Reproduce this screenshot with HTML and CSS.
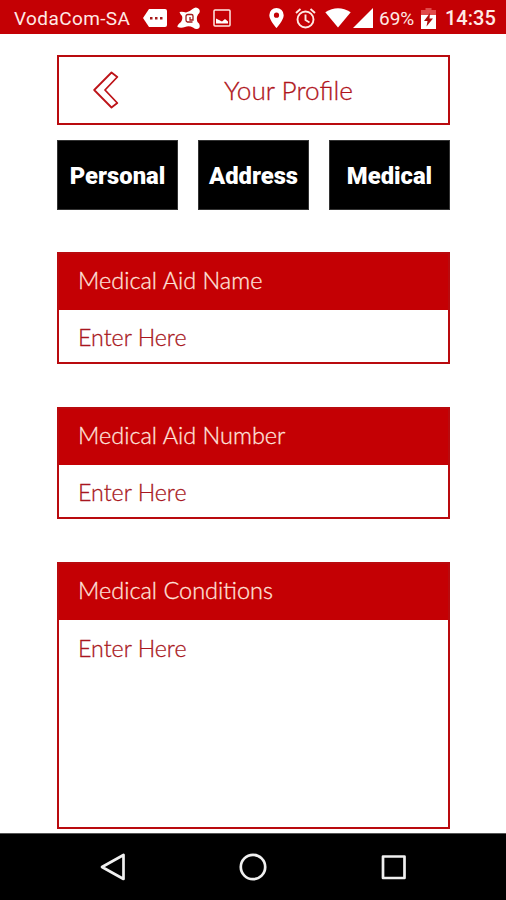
FILE: index.html
```html
<!DOCTYPE html>
<html lang="en">
  <head>
    <meta charset="UTF-8" />
    <meta name="viewport" content="width=device-width, initial-scale=1.0" />
    <title>Your Profile</title>
    <link rel="stylesheet" href="styles.css">
  </head>
  <body>
    <div class="status-bar">
      <div class="status-left">
        <span class="carrier">VodaCom-SA</span>
        <svg class="icon-message" width="24" height="18" viewBox="0 0 24 18">
          <path d="M6 0h16a2 2 0 0 1 2 2v14a2 2 0 0 1-2 2H6L0 9z" fill="#fff" />
          <path d="M7 8h2.500v2.500H7zM12 8h2.500v2.500H12zM17 8h2.500v2.500H17z" fill="#a51a1a" />
        </svg>
        <svg class="icon-shield" width="24" height="23" viewBox="0 0 24 23">
          <path d="M2.500 5Q6 4.500 9 5.500Q13 4.500 15.500 2Q19-1 22 2Q24 5 21 7.500Q19 11 20.500 15Q23.500 17 22.500 20.500Q20 23.500 16 20.500Q12 18.500 8 20Q4 21.500 .5 20Q0 18 4 15Q6 12 5 9Q3 7 2.500 5z" fill="#fff" />
          <path d="M15.500 15h-5a2 2 0 0 1-1.500-2V9.500a2 2 0 0 1 2-2h3.500a1.500 1.500 0 0 1 1.500 1.500v4h-3v-3" fill="none" stroke="#a51a1a" stroke-width="1.300" />
        </svg>
        <svg class="icon-image" width="18" height="18" viewBox="0 0 18 18">
          <rect x="1" y="1" width="16" height="16" rx="1" fill="none" stroke="#ffe9e4" stroke-width="1.500" />
          <path d="M3 14.500V9.500l3 1.500 3 1.500 3-2.500 3 2.500v2z" fill="#fff" />
        </svg>
      </div>
      <div class="status-right">
        <svg class="icon-pin" width="15" height="20" viewBox="0 0 15 20">
          <path d="M7.500 0A7.200 7.200 0 0 0 .3 7.200C.3 12 7.500 20 7.500 20s7.200-8 7.200-12.800A7.200 7.200 0 0 0 7.500 0zm0 4.600a2.600 2.600 0 1 1 0 5.200 2.600 2.600 0 0 1 0-5.200z" fill="#fff" />
        </svg>
        <svg class="icon-alarm" width="21" height="21" viewBox="0 0 21 21" fill="none" stroke="#ffe9e4" stroke-width="1.900">
          <circle cx="10.500" cy="11.500" r="8" />
          <path d="M10.500 6.500v5.500l4 2.500M1 5l4.500-4M20 5l-4.500-4" />
        </svg>
        <svg class="icon-wifi" width="26" height="20" viewBox="0 0 26 20">
          <path d="M13 19.500L.3 4.300Q13-4 25.700 4.300z" fill="#fff" />
        </svg>
        <svg class="icon-signal" width="20" height="20" viewBox="0 0 20 20">
          <path d="M20 0v20H0z" fill="#fff" />
        </svg>
        <span class="percent">69%</span>
        <svg class="icon-battery" width="15" height="21" viewBox="0 0 15 21">
          <path d="M4.500 0h6v2H15v5H0V2h4.500z" fill="#e04a4a" />
          <path d="M0 7h15v14H0z" fill="#fff" />
          <path d="M9 5l-6 8h3.500L5.500 18.500 12 10.500H8.500z" fill="#b00b0b" />
        </svg>
        <span class="clock">14:35</span>
      </div>
    </div>

    <main class="content">
      <header class="title-box">
        <svg class="back" width="26" height="38" viewBox="0 0 26 38">
          <path d="M1.200 19L18.500 1.500 24.300 6 12 19 24.300 32 18.500 36.500z" fill="none" stroke="#bd1318" stroke-width="1.800" stroke-linejoin="round" />
        </svg>
        <h1>Your Profile</h1>
      </header>

      <nav class="tabs">
        <button>Personal</button>
        <button>Address</button>
        <button>Medical</button>
      </nav>

      <section class="field">
        <h2>Medical Aid Name</h2>
        <p>Enter Here</p>
      </section>
      <section class="field">
        <h2>Medical Aid Number</h2>
        <p>Enter Here</p>
      </section>
      <section class="field field-large">
        <h2>Medical Conditions</h2>
        <p>Enter Here</p>
      </section>
    </main>

    <footer class="nav-bar">
      <svg width="28" height="28" viewBox="0 0 28 28">
        <path d="M3 14L24.500 2v24z" />
      </svg>
      <svg width="28" height="28" viewBox="0 0 28 28">
        <circle cx="14" cy="14" r="12.200" />
      </svg>
      <svg width="28" height="28" viewBox="0 0 28 28">
        <rect x="4" y="3.500" width="21.500" height="21.500" />
      </svg>
    </footer>
  </body>
</html>
```
FILE: styles.css
```css
* {
  box-sizing: border-box;
}
body {
  margin: 0;
  height: 900px;
  display: flex;
  flex-direction: column;
  background-color: #fff;
  font-family: Lato, sans-serif;
  overflow: hidden;
}
h1,
h2,
p {
  margin: 0;
  font-weight: 300;
  white-space: nowrap;
  -webkit-text-stroke: 0.3px;
}

/* status bar */
.status-bar {
  height: 34px;
  padding: 2px 11px 0 14px;
  display: flex;
  justify-content: space-between;
  background-color: #c40004;
  color: #ffe9e4;
  font-family: Roboto, sans-serif;
  font-size: 19px;
}
.status-left,
.status-right {
  display: flex;
  align-items: center;
}
.carrier {
  width: 117px;
  letter-spacing: 0.4px;
}
.icon-message {
  margin-left: 12px;
}
.icon-shield {
  margin-left: 10px;
}
.icon-image {
  margin-left: 12px;
}
.icon-alarm {
  margin-left: 11px;
}
.icon-wifi {
  margin-left: 9px;
}
.icon-signal {
  margin-left: 2px;
}
.percent {
  width: 37px;
  margin-left: 6px;
}
.icon-battery {
  margin-left: 5px;
}
.clock {
  width: 50px;
  margin-left: 9px;
  font-weight: 500;
  font-size: 20px;
}

/* page */
.content {
  width: 393px;
  height: 799px;
  padding-top: 21px;
  margin-left: 57px;
}
.title-box {
  height: 70px;
  display: flex;
  align-items: center;
  padding-left: 34px;
  border: 2px solid #b90a0e;
}
.title-box h1 {
  margin-left: 105px;
  color: #b0141b;
  font-size: 26.2px;
}
.tabs {
  height: 70px;
  margin-top: 15px;
  display: grid;
  grid-template-columns: 1fr 111px 1fr;
  gap: 20px;
}
.tabs button {
  padding: 2px 0 0;
  border: 1px solid #333;
  background-color: #000;
  color: #fff;
  font-family: Roboto, sans-serif;
  font-size: 23.8px;
  font-weight: 900;
}
.field {
  height: 112px;
  margin-top: 43px;
  border: 2px solid #b90a0e;
  color: #a81620;
  font-size: 23.2px;
}
.tabs + .field {
  margin-top: 42px;
}
.field h2 {
  height: 56px;
  padding-left: 19px;
  background-color: #c40004;
  color: #ffe3dc;
  font-size: 23.5px;
  line-height: 53px;
}
.field p {
  padding-left: 19px;
  line-height: 54px;
}
.field-large {
  height: 267px;
}
.field-large p {
  line-height: 56px;
}

/* android buttons */
.nav-bar {
  height: 67px;
  display: flex;
  justify-content: center;
  align-items: center;
  gap: 112px;
  background-color: #000;
  border-top: 1px solid #555;
}
.nav-bar svg {
  fill: none;
  stroke: #f0f0f0;
  stroke-width: 2.7;
  stroke-linejoin: round;
}
```
